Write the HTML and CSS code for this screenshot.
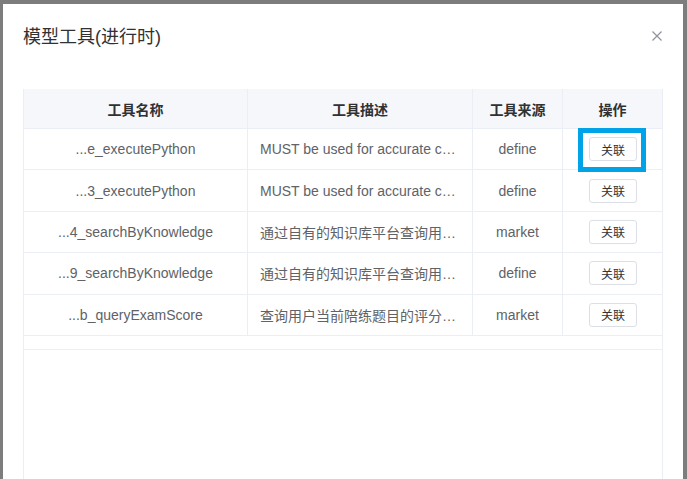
FILE: index.html
```html
<!DOCTYPE html>
<html lang="zh-CN">
<head>
<meta charset="utf-8">
<title>模型工具</title>
<link rel="stylesheet" href="styles.css">
</head>
<body>
<div class="backdrop">
  <div class="modal">
    <div class="modal-header">
      <div class="modal-title">模型工具(进行时)</div>
      <button class="close" aria-label="关闭">
        <svg width="10" height="10" viewBox="0 0 10 10"><path d="M0.5 0.5 L9.5 9.5 M9.5 0.5 L0.5 9.5" stroke="#909399" stroke-width="1.2" fill="none"/></svg>
      </button>
    </div>
    <div class="table">
      <div class="row head">
        <div class="cell center">工具名称</div>
        <div class="cell center">工具描述</div>
        <div class="cell center">工具来源</div>
        <div class="cell center last">操作</div>
      </div>
      <div class="row">
        <div class="cell center">...e_executePython</div>
        <div class="cell left"><span class="ellipsis">MUST be used for accurate calculations and code execution</span></div>
        <div class="cell center">define</div>
        <div class="cell center last op"><button class="btn">关联</button><span class="highlight"></span></div>
      </div>
      <div class="row">
        <div class="cell center">...3_executePython</div>
        <div class="cell left"><span class="ellipsis">MUST be used for accurate calculations and code execution</span></div>
        <div class="cell center">define</div>
        <div class="cell center last"><button class="btn">关联</button></div>
      </div>
      <div class="row">
        <div class="cell center">...4_searchByKnowledge</div>
        <div class="cell left"><span class="ellipsis">通过自有的知识库平台查询用户相关的知识内容</span></div>
        <div class="cell center">market</div>
        <div class="cell center last"><button class="btn">关联</button></div>
      </div>
      <div class="row">
        <div class="cell center">...9_searchByKnowledge</div>
        <div class="cell left"><span class="ellipsis">通过自有的知识库平台查询用户相关的知识内容</span></div>
        <div class="cell center">define</div>
        <div class="cell center last"><button class="btn">关联</button></div>
      </div>
      <div class="row">
        <div class="cell center">...b_queryExamScore</div>
        <div class="cell left"><span class="ellipsis">查询用户当前陪练题目的评分结果</span></div>
        <div class="cell center">market</div>
        <div class="cell center last"><button class="btn">关联</button></div>
      </div>
      <div class="spacer"></div>
    </div>
  </div>
</div>
</body>
</html>
```
FILE: styles.css
```css
html, body {
  margin: 0;
  padding: 0;
  height: 100%;
  overflow: hidden;
}
body {
  font-family: "Liberation Sans", "Noto Sans CJK SC", sans-serif;
  background: #7d7d7d;
}
.backdrop {
  padding: 4px 0 0 3px;
  height: 100%;
  box-sizing: border-box;
}
.modal {
  position: relative;
  width: 680px;
  height: 100%;
  background: #fff;
  padding: 0 20px;
  box-sizing: border-box;
  display: flex;
  flex-direction: column;
}
.modal-header {
  height: 85px;
  flex: none;
  padding-top: 21px;
  box-sizing: border-box;
}
.modal-title {
  font-size: 18px;
  line-height: 24px;
  color: #303133;
}
.close {
  position: absolute;
  right: 21px;
  top: 27px;
  width: 10px;
  height: 10px;
  padding: 0;
  border: 0;
  background: none;
  display: block;
}
.close svg { display: block; }
.table {
  width: 640px;
  flex: 1;
  min-height: 0;
  border-left: 1px solid #ebeef5;
  border-right: 1px solid #ebeef5;
  box-sizing: border-box;
  overflow: hidden;
}
.row {
  display: grid;
  grid-template-columns: 224px 225px 90px 99px;
  height: 41.4px;
  border-bottom: 1px solid #ebeef5;
  box-sizing: border-box;
  font-size: 14px;
  color: #606266;
}
.row.head {
  height: 40px;
  background: #f5f7fa;
  font-weight: bold;
  color: #303133;
}
.cell {
  border-right: 1px solid #ebeef5;
  display: flex;
  align-items: center;
  min-width: 0;
  box-sizing: border-box;
}
.cell.last { border-right: 0; }
.cell.center { justify-content: center; }
.cell.left { padding: 0 12px; }
.ellipsis {
  display: block;
  white-space: nowrap;
  overflow: hidden;
  text-overflow: ellipsis;
  min-width: 0;
}
.op { position: relative; }
.btn {
  width: 48px;
  height: 24px;
  padding: 0;
  border: 1px solid #dcdfe6;
  border-radius: 3px;
  background: #fff;
  font-family: "Liberation Sans", "Noto Sans CJK SC", sans-serif;
  font-size: 12px;
  color: #333;
  box-sizing: border-box;
  margin-left: 1px;
}
.highlight {
  position: absolute;
  left: 15px;
  top: -1px;
  width: 68px;
  height: 44px;
  border: 5px solid #00a3e8;
  box-sizing: border-box;
}
.spacer {
  height: 13px;
  border-bottom: 1px solid #ebeef5;
}
```
